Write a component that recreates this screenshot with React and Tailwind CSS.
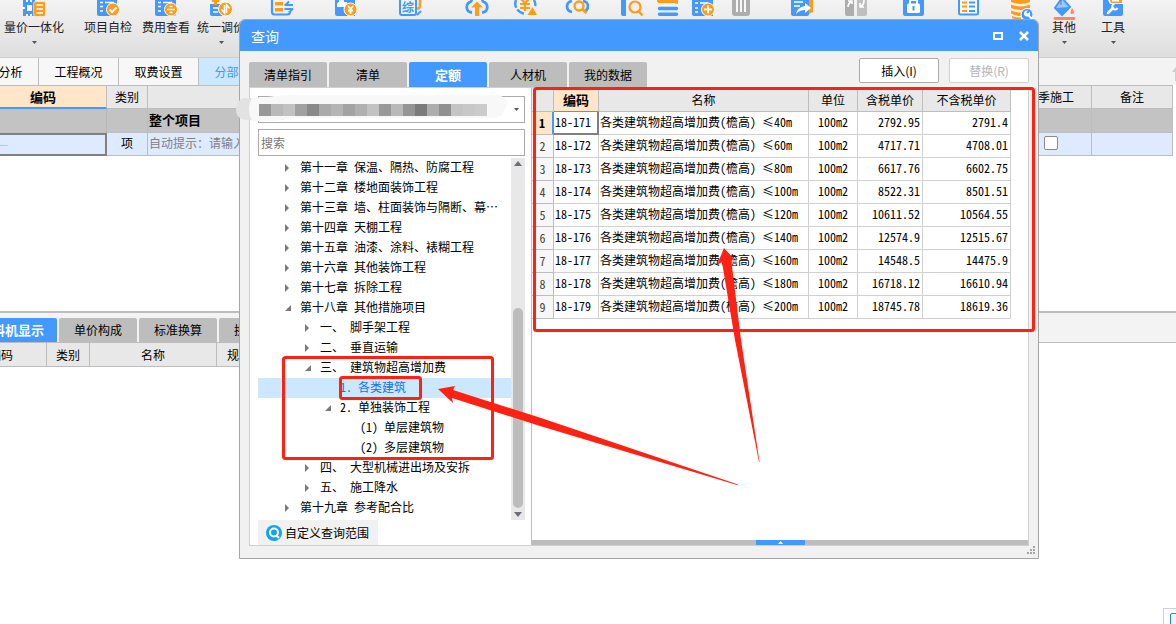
import { useState } from 'react';

const BLUE = '#4499ff';
const ORANGE = '#ff9c1a';

// toolbar drawings, all on a 24x20 canvas
const ICONS = {
  merge: (
    <>
      <path fill={BLUE} d="M1 0h12v16H1z" />
      <path fill="#fff" d="M4 0h2v2H4zM8 0h2v2H8zM5 5h5v6H5zM1 7h2v2H1zM4 14h2v2H4zM8 14h2v2H8z" />
      <rect x="11.500" y="1.500" width="12" height="15" rx="2" fill={ORANGE} stroke="#fff" strokeWidth="0.500" />
      <path stroke="#fff" strokeWidth="1.600" d="M14.500 5h6.500M14.500 9h6.500M14.500 13h6.500" />
    </>
  ),
  check: (
    <>
      <path fill={BLUE} d="M1 0h20v14a2 2 0 0 1-2 2H3a2 2 0 0 1-2-2z" />
      <path stroke="#fff" strokeWidth="1.400" d="M4 2.500h3M9 2.500h9M4 6.500h3M4 11h3" />
      <circle cx="17" cy="9.500" r="6.500" fill={ORANGE} stroke="#fff" />
      <path fill="none" stroke="#fff" strokeWidth="2" d="m13.500 9.500 2.500 2.500 4.500-4.500" />
    </>
  ),
  divide: (
    <>
      <path fill={BLUE} d="M1 0h21v14a2 2 0 0 1-2 2H3a2 2 0 0 1-2-2z" />
      <path stroke="#fff" strokeWidth="1.400" d="M4 2.500h3M9 2.500h9M4 6.500h3M4 11h3" />
      <circle cx="17" cy="9.500" r="6.500" fill={ORANGE} stroke="#fff" />
      <path stroke="#fff" strokeWidth="1.600" d="M13 9.500h8M15.500 6.500h3M15.500 12.500h3" />
    </>
  ),
  adjust: (
    <>
      <path fill={BLUE} d="M1 4h14v12H3a2 2 0 0 1-2-2z" />
      <path fill={ORANGE} d="M3 0h7v2H8v3H5V2H3z" />
      <path stroke="#fff" strokeWidth="1.400" d="M4 8h5M4 12h5" />
      <circle cx="16.500" cy="9" r="7" fill={ORANGE} stroke="#fff" />
      <path fill="none" stroke="#fff" strokeWidth="1.600" d="M15.500 5v8l-3-3.500M17.500 13V5l3 3.500" />
    </>
  ),
  transfer: (
    <>
      <path fill="none" stroke={BLUE} strokeWidth="2.200" d="M2 -1v13q0 2.500 2.500 2.500h13q2.500 0 2.500-3" />
      <path fill={ORANGE} d="M5 2h8v3.500H5zM5 8h8v3.500H5z" />
      <path stroke={BLUE} strokeWidth="2" fill="none" d="M14.500 5h8.500M15 5.500l4-4M14.500 9h8.500M23 8.500l-4 4" />
    </>
  ),
  payer: (
    <>
      <path fill={BLUE} d="M1 0h20v16H3a2 2 0 0 1-2-2z" />
      <path fill="#fff" d="M5 0h5v2h3v5H3V4c0-1 1-2 2-2z" />
      <circle cx="16.500" cy="9.500" r="6.500" fill={ORANGE} stroke="#fff" />
      <path fill="none" stroke="#fff" strokeWidth="1.800" d="m14 6 2.500 3L19 6M16.500 9v5M14 10.500h5" />
    </>
  ),
  summary: (
    <>
      <path fill="none" stroke={ORANGE} strokeWidth="2.500" d="M22 0v6q0 2-3 3" />
      <path stroke={BLUE} strokeWidth="2" d="m19 15 4-4" />
      <rect x="2" y="-2" width="16" height="17" rx="2" fill="#eef6ff" stroke={BLUE} strokeWidth="2" />
      <text x="4" y="12" fontSize="12" fontWeight="700" fill={BLUE} fontFamily="Noto Sans CJK SC, sans-serif">综</text>
    </>
  ),
  upload: (
    <>
      <path fill="none" stroke={BLUE} strokeWidth="2.800" d="M7 12.500Q2 12 1.800 7.500T6 1.500L7-1M17 12.500q5-.5 5.200-5T18 1.500L17-1" />
      <path fill={ORANGE} d="m12 1.500 6 6h-4V16h-4V7.500H6z" />
    </>
  ),
  currency: (
    <>
      <path fill="none" stroke={BLUE} strokeWidth="2.500" strokeDasharray="8 2" d="M3 0C1 5 3 12 12 14M21 0c1 2 2 4 1 6" />
      <path fill="none" stroke={ORANGE} strokeWidth="2.200" d="m8-1 4 4 4-4M12 3v8M7 4h10M7 8h10" />
      <path fill={ORANGE} d="m19.500 7 4.500 8H14.500z" />
    </>
  ),
  cloudSearch: (
    <>
      <path fill="none" stroke={BLUE} strokeWidth="2.800" d="M7 12Q2 11 2 6.500T7 1M18 1q5 1 5 5t-3 5" />
      <circle cx="14" cy="6" r="4.500" fill="none" stroke={ORANGE} strokeWidth="2.400" />
      <path stroke={ORANGE} strokeWidth="3" d="m17 9 4.500 4" />
    </>
  ),
  docSearch: (
    <>
      <path fill={BLUE} d="M2 0h5v16H4a2 2 0 0 1-2-2z" />
      <circle cx="16" cy="7" r="5.500" fill="none" stroke={ORANGE} strokeWidth="2.200" />
      <path stroke={ORANGE} strokeWidth="2.500" d="m19.500 11 4 4.500" />
    </>
  ),
  lines: (
    <>
      <path fill={ORANGE} d="M2 0h21v4l-4-1H4a2 2 0 0 1-2-2z" />
      <path stroke={BLUE} strokeWidth="3.500" strokeLinecap="round" d="M4.500 8.500h17M4.500 14.200h17" />
    </>
  ),
  addDoc: (
    <>
      <path fill={BLUE} d="M1 0h21v16H3a2 2 0 0 1-2-2z" />
      <path stroke="#fff" strokeWidth="1.500" d="M4 3h3M9 3h8M4 8h3M4 12h3" />
      <circle cx="17" cy="9.500" r="6.500" fill={ORANGE} stroke="#fff" />
      <path stroke="#fff" strokeWidth="2" d="M13 9.500h8M17 5.500v8" />
    </>
  ),
  trash: (
    <>
      <path fill="#adadad" d="M3 0h18v13a3 3 0 0 1-3 3H6a3 3 0 0 1-3-3z" />
      <path stroke="#fff" strokeWidth="1.800" d="M8 0v12M12 0v12M16 0v12" />
    </>
  ),
  exportDoc: (
    <>
      <path fill={ORANGE} d="M17 0h7v12l-4 2z" />
      <path fill={BLUE} d="M2 0h18v14a2 2 0 0 1-2 2H4a2 2 0 0 1-2-2z" />
      <path stroke="#fff" strokeWidth="1.500" d="M5 2h9M5 6h6" />
      <path fill="#fff" d="m16 3 6 5-6 5v-3c-4 0-6 1-9 4 1-5 4-7 9-8z" />
    </>
  ),
  swap: (
    <>
      <path fill="#adadad" d="M2 0h9v16H4a2 2 0 0 1-2-2z" />
      <path fill="#bfbfbf" d="M14 0h10v14a2 2 0 0 1-2 2h-8z" />
      <path fill="none" stroke="#fff" strokeWidth="1.600" d="M5 7c0-3 1-4 4-6M5 1h4v3M21 0c0 4-1 5-4 7M17 3v4h4" />
    </>
  ),
  lock: (
    <>
      <path fill={BLUE} d="M2 0h21v14a2 2 0 0 1-2 2H4a2 2 0 0 1-2-2z" />
      <path fill="none" stroke="#fff" strokeWidth="2" d="M9 5V0h7v5" />
      <rect x="6" y="3.500" width="13" height="9.500" rx="1.500" fill="#fff" />
      <path fill={BLUE} d="M11.500 6h2v4.500h-2z" />
    </>
  ),
  list: (
    <>
      <path fill="#f4f9ff" stroke={BLUE} strokeWidth="2" d="M3 -2v15q0 1.500 1.500 1.500h16q1.500 0 1.500-1.500V-2" />
      <path stroke={ORANGE} strokeWidth="2" d="M6 2.500h5M6 6.500h5M6 11h5" />
      <path stroke={BLUE} strokeWidth="2" d="M13 2.500h6M13 6.500h6M13 11h6" />
    </>
  ),
  database: (
    <>
      <path fill={ORANGE} d="M2 0h19v2q-9.500 4-19 0zM2 4.500q9.500 4 19 0v3.500q-9.500 4-19 0zM2 10.500q5 2 10 2v3.500q-5 0-10-2.500zM3 16q4 2 9 1.500V20Q6 20 3 18z" />
      <circle cx="18" cy="14.500" r="6" fill={BLUE} stroke="#fff" />
      <circle cx="18" cy="13.500" r="3" fill="#fff" />
      <path stroke="#fff" strokeWidth="2" d="m18 14 5 5" />
      <path stroke={BLUE} strokeWidth="2" d="m18 13 3-3" />
    </>
  ),
  bucket: (
    <>
      <path fill="#9cc9ff" stroke={BLUE} strokeWidth="2" d="m10-2 8 9-8 8-7-7z" />
      <path fill={BLUE} d="m4 8 13-1-7 8z" />
      <path fill="none" stroke="#777" d="M9 0v5" />
      <path fill="#ff8563" d="M20 8c3 4 2 6 0 6s-2-2 0-6z" />
      <path stroke="#ff8563" strokeWidth="2.800" strokeLinecap="round" d="M3 18.500h19" />
    </>
  ),
  wrench: (
    <>
      <path fill={BLUE} d="M2 0h5l2 4h13v10a2 2 0 0 1-2 2H4a2 2 0 0 1-2-2z" />
      <path fill={ORANGE} d="M9 0h12v3H10z" />
      <path fill="#fff" d="M11 0h7v1.500h-7z" />
      <path stroke="#fff" strokeWidth="2.500" strokeLinecap="round" d="m7 13 5-5" />
      <path fill="none" stroke="#fff" strokeWidth="2" d="M13.500 4a2.800 2.800 0 1 0 3 4" />
    </>
  ),
};

const TOOLS = [
  { icon: 'merge', label: '量价一体化', caret: true, cls: 'ml-1 w-[60px]' },
  { icon: 'check', label: '项目自检', cls: 'ml-5 w-12' },
  { icon: 'divide', label: '费用查看', cls: 'ml-[10px] w-12' },
  { icon: 'adjust', label: '统一调价', caret: true, cls: 'ml-[7px] w-12' },
  { icon: 'transfer', title: '导入', cls: 'ml-[25px] w-6' },
  { icon: 'payer', title: '人材机', cls: 'ml-10 w-6' },
  { icon: 'summary', title: '综合', cls: 'ml-10 w-6' },
  { icon: 'upload', title: '上传', cls: 'ml-[43px] w-6' },
  { icon: 'currency', title: '价格', cls: 'ml-6 w-6' },
  { icon: 'cloudSearch', title: '云检查', cls: 'ml-7 w-6' },
  { icon: 'docSearch', title: '查询', cls: 'ml-[30px] w-6' },
  { icon: 'lines', title: '插入', cls: 'ml-3 w-6' },
  { icon: 'addDoc', title: '补充', cls: 'ml-3 w-6' },
  { icon: 'trash', title: '删除', cls: 'ml-[14px] w-6' },
  { icon: 'exportDoc', title: '导出', cls: 'ml-9 w-6' },
  { icon: 'swap', title: '替换数据', cls: 'ml-[30px] w-6' },
  { icon: 'lock', title: '锁定', cls: 'ml-[34px] w-6' },
  { icon: 'list', title: '整理', cls: 'ml-[31px] w-6' },
  { icon: 'database', title: '数据', cls: 'ml-[29px] w-6' },
  { icon: 'bucket', label: '其他', caret: true, cls: 'ml-[19px] w-6' },
  { icon: 'wrench', label: '工具', caret: true, cls: 'ml-[25px] w-6' },
];

const TREE = [
  { level: 1, text: '第十一章 保温、隔热、防腐工程' },
  { level: 1, text: '第十二章 楼地面装饰工程' },
  { level: 1, text: '第十三章 墙、柱面装饰与隔断、幕…' },
  { level: 1, text: '第十四章 天棚工程' },
  { level: 1, text: '第十五章 油漆、涂料、裱糊工程' },
  { level: 1, text: '第十六章 其他装饰工程' },
  { level: 1, text: '第十七章 拆除工程' },
  { level: 1, text: '第十八章 其他措施项目', open: true },
  { level: 2, text: '一、 脚手架工程' },
  { level: 2, text: '二、 垂直运输' },
  { level: 2, text: '三、 建筑物超高增加费', open: true },
  { level: 3, text: '1. 各类建筑', leaf: true },
  { level: 3, text: '2. 单独装饰工程', open: true },
  { level: 4, text: '(1) 单层建筑物', leaf: true },
  { level: 4, text: '(2) 多层建筑物', leaf: true },
  { level: 2, text: '四、 大型机械进出场及安拆' },
  { level: 2, text: '五、 施工降水' },
  { level: 1, text: '第十九章 参考配合比' },
];

const INDENT = { 1: 'pl-[26px]', 2: 'pl-[46px]', 3: 'pl-[66px]', 4: 'pl-[86px]' };

const QUOTAS = [
  ['18-171', '40m', '2792.95', '2791.4'],
  ['18-172', '60m', '4717.71', '4708.01'],
  ['18-173', '80m', '6617.76', '6602.75'],
  ['18-174', '100m', '8522.31', '8501.51'],
  ['18-175', '120m', '10611.52', '10564.55'],
  ['18-176', '140m', '12574.9', '12515.67'],
  ['18-177', '160m', '14548.5', '14475.9'],
  ['18-178', '180m', '16718.12', '16610.94'],
  ['18-179', '200m', '18745.78', '18619.36'],
];

const MOSAIC = [
  '#999999', '#b9b9b9', '#c2c2c2', '#a1a1a1', '#898989', '#aaaaaa', '#b5b5b5', '#a3a3a3', '#b0b0b0', '#c2c2c2',
  '#999999', '#b9b9b9', '#959595', '#7b7b7b', '#adadad', '#909090', '#c4c4c4', '#c8c8c8', '#cbcbcb',
];

function Caret() {
  return <svg className="h-[3px] w-[5px]" viewBox="0 0 5 3"><path fill="#555" d="M0 0h5L2.500 3z" /></svg>;
}

function Toolbar() {
  return (
    <div className="flex h-[57px] overflow-hidden bg-linear-to-b from-[#f3f3f3] to-[#dedede]">
      {TOOLS.map(t => (
        <button key={t.icon} aria-label={t.label || t.title} className={`flex shrink-0 flex-col items-center text-[#222] ${t.cls}`}>
          <svg className="h-5 w-6 shrink-0" viewBox="0 0 24 20">{ICONS[t.icon]}</svg>
          {t.label && <span className="h-[21px] leading-[14px] whitespace-nowrap">{t.label}</span>}
          {t.caret && <Caret />}
        </button>
      ))}
    </div>
  );
}

function ProjectTabs() {
  return (
    <div className="h-7 overflow-hidden border-t border-[#cfcfcf] bg-[#f3f3f3]">
      <div className="-ml-[41px] flex h-[27px]">
        {['造价分析', '工程概况', '取费设置', '分部分项'].map(t => (
          <button
            key={t}
            className={`w-20 border-r border-[#bdbdbd] pt-px ${t === '分部分项' ? 'bg-[#cce8ff] text-[#4499ff]' : 'bg-[#f7f7f7]'}`}
          >
            {t}
          </button>
        ))}
        <svg className="mt-1 -mr-1 ml-auto h-5 w-2" viewBox="0 0 8 20"><path fill="#cfcfcf" d="M0 10 6 2h2v17H3v-9z" /></svg>
      </div>
    </div>
  );
}

function ProjectTable() {
  return (
    <div className="overflow-hidden pr-[3px]">
      <table className="-ml-5 w-[calc(100%+20px)] table-fixed border-separate border-spacing-0 [&_td]:border-r [&_td]:border-b [&_td]:border-[#bdbdbd] [&_td]:pb-[2px] [&_th]:border-r [&_th]:border-b [&_th]:border-[#bdbdbd]">
        <colgroup>
          <col className="w-[127px]" />
          <col className="w-[41px]" />
          <col />
          <col className="w-[95px]" />
          <col className="w-[81px]" />
        </colgroup>
        <thead>
          <tr className="h-6 bg-[#e8e8e8]">
            <th className="border-t !border-b-2 !border-b-[#4499ff] bg-[#ffe6c8] text-[13px] leading-5">编码</th>
            <th className="border-t font-normal">类别</th>
            <th className="border-t font-normal">名称</th>
            <th className="border-t font-normal">冬雨季施工</th>
            <th className="border-t font-normal">备注</th>
          </tr>
        </thead>
        <tbody>
          <tr className="h-6 bg-[#c3c3c3]">
            <td className="!border-r-[#b7b7b7]" />
            <td />
            <td className="pl-px text-[13px] leading-5 font-bold">整个项目</td>
            <td />
            <td />
          </tr>
          <tr className="h-[23px] bg-[#deeaff]">
            <td className="!border-2 !border-[#808080] pl-4 leading-4 text-[#ffb45a]">—</td>
            <td className="text-center">项</td>
            <td className="pl-px text-[#808080]">自动提示：请输入清单简称</td>
            <td className="pl-[47px]">
              <input type="checkbox" aria-label="冬雨季施工" className="block size-[14px] appearance-none rounded-xs border border-[#8a8a8a] bg-white" />
            </td>
            <td />
          </tr>
        </tbody>
      </table>
    </div>
  );
}

function DetailPane() {
  const tabs = ['料机显示', '单价构成', '标准换算', '换算信息'];
  return (
    <div className="overflow-hidden border-t-2 border-[#bdbdbd]">
      <div className="border-b border-[#bdbdbd] bg-[#f3f3f3] pt-[5px]">
        <div className="-ml-[21px] flex h-6 gap-[2px]">
          {tabs.map((t, i) => (
            <button
              key={t}
              className={`w-[78px] rounded-t-xs ${i === 0 ? 'bg-[#4499ff] text-[13px] font-bold text-white' : 'bg-[#bdbdbd]'}`}
            >
              {t}
            </button>
          ))}
        </div>
      </div>
      <table className="-ml-11 h-6 table-fixed border-separate border-spacing-0 bg-[#e8e8e8] [&_th]:border-r [&_th]:border-b [&_th]:border-[#bdbdbd] [&_th]:font-normal">
        <thead>
          <tr>
            <th className="w-[91px]">编码</th>
            <th className="w-[43px]">类别</th>
            <th className="w-[127px]">名称</th>
            <th className="w-[69px]">规格型号</th>
          </tr>
        </thead>
      </table>
    </div>
  );
}

function TreeArrow({ open }) {
  return (
    <svg className="mt-px h-2 w-[7px] shrink-0" viewBox="0 0 7 8">
      <path fill="#7a7a7a" d={open ? 'M7 1v6H1z' : 'M1 0l4 4-4 4z'} />
    </svg>
  );
}

function ChapterTree() {
  const [selected, setSelected] = useState('1. 各类建筑');
  return (
    <div className="mt-[2px] flex h-[363px]">
      <ul className="min-w-0 grow">
        {TREE.map(n => (
          <li key={n.text}>
            <button
              onClick={() => setSelected(n.text)}
              className={`flex h-5 w-full items-center whitespace-pre ${INDENT[n.level]} ${selected === n.text ? 'bg-[#cce8ff] text-[#1573e6]' : ''}`}
            >
              {n.leaf ? <span className="w-[7px]" /> : <TreeArrow open={n.open} />}
              <span className="pb-[2px] pl-[9px]">{n.text}</span>
            </button>
          </li>
        ))}
      </ul>
      <div className="flex w-[14px] shrink-0 flex-col items-center bg-[#e8e8e8] py-[3px]">
        <svg className="h-[5px] w-2" viewBox="0 0 8 5"><path fill="#6e6e78" d="M4 0l4 5H0z" /></svg>
        <div className="mt-auto h-[200px] w-[10px] rounded-full bg-[#bdbdbd]" />
        <svg className="mt-1 h-[5px] w-2" viewBox="0 0 8 5"><path fill="#6e6e78" d="M0 0h8L4 5z" /></svg>
      </div>
    </div>
  );
}

function QueryPanel() {
  return (
    <div className="flex w-[281px] shrink-0 flex-col bg-white pt-2 pr-[6px] pl-2">
      <div className="relative">
        <select aria-label="定额库" className="block h-[27px] w-full appearance-none border border-[#ababab] bg-white pl-1">
          <option value="" />
        </select>
        <svg className="absolute top-3 right-[6px] h-[3px] w-[5px]" viewBox="0 0 5 3"><path fill="#555" d="M0 0h5L2.500 3z" /></svg>
        {/* pixelated library name */}
        <svg className="absolute -top-[2px] -left-[22px] h-7 w-[276px]" viewBox="0 0 276 28" aria-hidden="true">
          <path fill="#e2e2e2" d="M8 4h40v22H12C4 26 0 22 0 16S2 6 8 4z" />
          <path fill="#f8f8f8" d="M16 4C30 4 40 1 52 1h206c8 0 12 3 14 8l-6 12c-2 2-8 3-12 3H60c-12 0-14 3-24 3H16c-4-8-4-17 0-23z" />
          {MOSAIC.map((c, i) => <rect key={i} x={23 + i * 12} y="10" width="12" height="12" fill={c} />)}
        </svg>
      </div>
      <input aria-label="搜索" placeholder="搜索" className="mt-[6px] h-[27px] w-full border border-[#ababab] px-[2px] placeholder:text-[#777]" />
      <ChapterTree />
      <button className="flex h-[25px] w-[120px] items-center gap-[3px] bg-[#f1f1f1] pl-2">
        <svg className="size-4" viewBox="0 0 16 16">
          <circle cx="8" cy="8" r="8" fill="#12a5ee" />
          <circle cx="8" cy="7.500" r="4" fill="none" stroke="#fff" strokeWidth="2" />
          <path stroke="#fff" strokeWidth="2" d="m10 10 3 3" />
        </svg>
        自定义查询范围
      </button>
    </div>
  );
}

function QuotaTable() {
  return (
    <table className="w-[479px] table-fixed border-separate border-spacing-0 whitespace-pre [&_td]:border-r [&_td]:border-b [&_td]:border-[#d0d0d0] [&_td]:pb-[2px] [&_th]:border-r [&_th]:border-b [&_th]:border-[#bdbdbd] [&_th]:p-0">
      <thead>
        <tr className="h-6 bg-[#e8e8e8]">
          <th className="w-[22px]" />
          <th className="w-[45px] !border-b-[#4499ff] bg-[#ffe6c8] text-[13px] leading-5">编码</th>
          <th className="w-[210px] font-normal">名称</th>
          <th className="w-[49px] font-normal">单位</th>
          <th className="w-[65px] font-normal">含税单价</th>
          <th className="w-[88px] font-normal">不含税单价</th>
        </tr>
      </thead>
      <tbody>
        {QUOTAS.map(([code, height, taxed, untaxed], i) => (
          <tr key={code} className="h-[23px]">
            <th className={`leading-5 ${i === 0 ? '!border-r-2 !border-r-[#4499ff] bg-[#ffe6c8]' : 'bg-[#f7f7f7] font-normal text-[#444]'}`}>{i + 1}</th>
            <td className={`pl-px leading-4 ${i === 0 ? '!border-r-2 !border-b-2 !border-[#808080]' : ''}`}>{code}</td>
            <td className="pl-px">各类建筑物超高增加费(檐高) ≤{height}</td>
            <td className="text-center">100m2</td>
            <td className="pr-[2px] text-right">{taxed}</td>
            <td className="pr-[2px] text-right">{untaxed}</td>
          </tr>
        ))}
      </tbody>
    </table>
  );
}

function QueryDialog() {
  const [tab, setTab] = useState('定额');
  return (
    <section aria-label="查询" className="absolute top-[19px] left-[239px] flex h-[540px] w-[800px] flex-col rounded-t-md border border-[#a5a5a5] bg-[#f1f1f1]">
      <header className="flex h-[31px] shrink-0 items-center rounded-t-[5px] bg-[#4499ff] pr-[9px] pl-[11px] text-white">
        <h1 className="grow text-sm">查询</h1>
        <button aria-label="最大化" className="mr-4 h-2 w-[10px] border-2 border-white" />
        <button aria-label="关闭">
          <svg className="h-[10px] w-[10px]" viewBox="0 0 10 10"><path stroke="#fff" strokeWidth="2.500" d="m1 1 8 8M9 1 1 9" /></svg>
        </button>
      </header>
      <div className="flex h-9 shrink-0 items-end gap-[2px] pr-[9px] pl-[9px]">
        {['清单指引', '清单', '定额', '人材机', '我的数据'].map(t => (
          <button
            key={t}
            onClick={() => setTab(t)}
            className={`h-[25px] w-[78px] rounded-t-xs ${tab === t ? 'bg-[#4499ff] text-[13px] font-bold text-white' : 'bg-[#bdbdbd]'}`}
          >
            {t}
          </button>
        ))}
        <div className="mb-1 ml-auto flex gap-[10px] font-['Noto_Sans_CJK_SC',sans-serif]">
          <button className="h-[25px] w-20 rounded-xs border border-[#ababab] bg-white">插入(I)</button>
          <button disabled className="h-[25px] w-20 rounded-xs border border-[#d0d0d0] bg-white text-[#b5b5b5]">替换(R)</button>
        </div>
      </div>
      <div className="mr-[9px] ml-[9px] flex min-h-0 grow border border-[#d0d0d0] bg-white">
        <QueryPanel />
        <div className="flex grow flex-col border-l border-[#bdbdbd]">
          <QuotaTable />
          <div className="mt-auto flex h-[5px] justify-center bg-[#bdbdbd]">
            <button aria-label="展开" className="flex w-[49px] items-center justify-center bg-[#4499ff]">
              <svg className="h-[3px] w-[5px]" viewBox="0 0 5 3"><path fill="#fff" d="M2.500 0 5 3H0z" /></svg>
            </button>
          </div>
        </div>
      </div>
      <footer className="flex h-3 shrink-0 justify-end pr-[3px]">
        <svg className="h-2 w-2" viewBox="0 0 8 8">
          <path fill="#a5a5a5" d="M6 0h2v2H6zM3 3h2v2H3zM6 3h2v2H6zM0 6h2v2H0zM3 6h2v2H3zM6 6h2v2H6z" />
        </svg>
      </footer>
    </section>
  );
}

// red boxes and arrows drawn over the window
function Markup() {
  return (
    <svg className="pointer-events-none absolute top-0 left-0 h-[624px] w-[1176px]" viewBox="0 0 1176 624" aria-hidden="true">
      <g fill="none" stroke="#ff2112" strokeWidth="3">
        <rect x="534.500" y="88.500" width="499" height="242" rx="2" />
        <rect x="283.500" y="357.500" width="209" height="101" rx="2" />
        <rect x="340.500" y="377.500" width="80" height="21" rx="2" />
      </g>
      <g fill="#ff2112">
        <path d="M438 389l17-3-2 4 88 28 197 66.500-1 .500-197-59-88-28 1 5z" />
        <path d="M724 248l10 11-3-.500 10 81.500 18.500 122h-.500L735 340l-13-78-5 3z" />
      </g>
    </svg>
  );
}

export default function App() {
  return (
    <div lang="zh-CN" className="relative min-h-screen overflow-hidden bg-white font-['Noto_Sans_Mono_CJK_SC','Noto_Sans_CJK_SC',sans-serif] text-xs text-black">
      <Toolbar />
      <ProjectTabs />
      <main>
        <div className="h-[226px]">
          <ProjectTable />
        </div>
        <DetailPane />
      </main>
      <QueryDialog />
      <Markup />
      <div className="absolute right-0 bottom-0 h-4 w-[13px] overflow-hidden border-t border-l border-[#c9d3e8] bg-white pt-1 pl-[6px]">
        <div className="h-4 w-4 rounded-xs border border-[#3a78f2] bg-[#eef4ff]" />
      </div>
    </div>
  );
}
